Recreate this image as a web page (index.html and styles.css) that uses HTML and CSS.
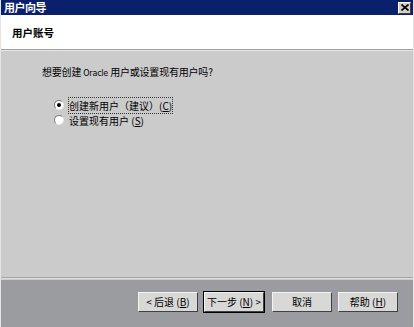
FILE: index.html
```html
<!DOCTYPE html>
<html lang="zh-CN">
<head>
    <meta charset="UTF-8">
    <title>用户向导</title>
    <link rel="stylesheet" href="styles.css">
</head>
<body>
    <div class="dialog">
        <div class="titlebar">
            <span class="title">用户向导</span>
            <span class="close">
                <svg width="8" height="7" viewBox="0 0 8 7">
                    <path d="M0.5 0.5 L7.5 6.5 M7.5 0.5 L0.5 6.5" stroke="#000" stroke-width="1.6"/>
                </svg>
            </span>
        </div>
        <div class="header">用户账号</div>
        <div class="content">
            <p class="question">想要创建 <span class="latin">Oracle</span> 用户或设置现有用户吗?</p>
            <div class="options">
                <label class="option">
                    <span class="radio checked"></span>
                    <span class="focus">创建新用户（建议）(<u>C</u>)</span>
                </label>
                <label class="option">
                    <span class="radio"></span>
                    <span>设置现有用户 (<u>S</u>)</span>
                </label>
            </div>
        </div>
        <div class="footer">
            <button class="btn">&lt; 后退 (<u>B</u>)</button>
            <button class="btn default">下一步 (<u>N</u>) &gt;</button>
            <button class="btn spaced">取消</button>
            <button class="btn">帮助 (<u>H</u>)</button>
        </div>
    </div>
</body>
</html>
```

FILE: styles.css
```css
html, body {
    margin: 0;
    padding: 0;
}

body {
    font-family: "Noto Sans CJK SC", "DejaVu Sans", sans-serif;
    font-size: 10px;
    color: #000;
}

.dialog {
    width: 414px;
    height: 327px;
    display: flex;
    flex-direction: column;
    background-color: #cbcbcb;
    border-left: 1px solid #e4e4e4;
    border-right: 1px solid #e4e4e4;
    box-sizing: border-box;
}

.titlebar {
    height: 15px;
    background-color: #0b206b;
    color: #fff;
    display: flex;
    align-items: center;
    justify-content: space-between;
    padding: 0 2px 0 3px;
}

.title {
    font-size: 11px;
    font-weight: bold;
    line-height: 15px;
    letter-spacing: -0.5px;
}

.close {
    width: 13px;
    height: 12px;
    background-color: #d4d0c8;
    border: 1px solid;
    border-color: #fff #404040 #404040 #fff;
    display: flex;
    align-items: center;
    justify-content: center;
    box-sizing: border-box;
}

.header {
    height: 34px;
    background-color: #fff;
    font-weight: bold;
    font-size: 10.5px;
    display: flex;
    align-items: center;
    padding-left: 11px;
    border-bottom: 1px solid #9f9f9f;
    box-shadow: 0 1px 0 #e6e6e6;
}

.content {
    flex: 1;
    padding: 15px 0 0 41px;
    border-bottom: 1px solid #a4a4a4;
    box-shadow: 0 1px 0 #dcdcdc;
}

.question {
    margin: 0;
    line-height: 14px;
    letter-spacing: -0.2px;
}

.latin {
    font-family: "DejaVu Sans", sans-serif;
    font-size: 8px;
}

.options {
    display: flex;
    flex-direction: column;
    gap: 1px;
    margin: 17px 0 0 12px;
}

.option {
    display: flex;
    align-items: center;
    gap: 5px;
    height: 14px;
}

.radio {
    width: 8px;
    height: 8px;
    border-radius: 50%;
    background-color: #fff;
    border: 1px solid #8a8a8a;
    border-color: #7a7a7a #e8e8e8 #e8e8e8 #7a7a7a;
    position: relative;
}

.radio.checked::after {
    content: "";
    position: absolute;
    left: 2px;
    top: 2px;
    width: 4px;
    height: 4px;
    border-radius: 50%;
    background-color: #000;
}

.focus {
    outline: 1px dotted #333;
    outline-offset: 0;
}

.footer {
    height: 47px;
    margin-top: 2px;
    background-color: #9b9ca0;
    display: flex;
    align-items: center;
    justify-content: flex-end;
    gap: 6px;
    padding: 0 15px 0 0;
}

.btn {
    width: 60px;
    height: 20px;
    padding: 0;
    font-family: inherit;
    font-size: 10px;
    background-color: #d8d8d6;
    border: 1px solid;
    border-color: #f4f4f4 #404040 #404040 #f4f4f4;
    color: #000;
    margin-bottom: 4px;
}

.btn.default {
    outline: 1px solid #000;
    outline-offset: 0;
}

.btn.spaced {
    margin-left: 2px;
}
```
